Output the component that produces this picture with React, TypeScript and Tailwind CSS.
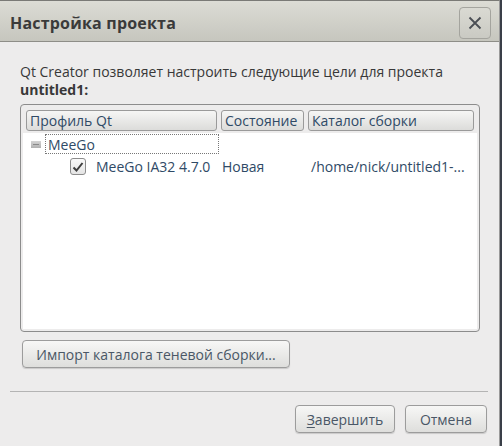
import React from "react";

const font = { fontFamily: '"Open Sans", "DejaVu Sans", sans-serif' };

function HeaderCell({ label, width }: { label: string; width: string }) {
  return (
    <div
      className={`${width} h-[21px] flex items-center px-[3px] rounded-[3px] border border-[#9a9a9a] bg-gradient-to-b from-[#f6f6f5] to-[#dcdcda] text-[14px] text-[#2f4a66] leading-none`}
    >
      {label}
    </div>
  );
}

function Button({ children, className }: { children: React.ReactNode; className: string }) {
  return (
    <div
      className={`${className} h-[28px] flex items-center justify-center rounded-[4px] border border-[#9c9c9c] bg-gradient-to-b from-[#f7f7f6] to-[#dededc] shadow-[0_1px_1px_rgba(0,0,0,0.15)] text-[14px] text-[#4a5766]`}
    >
      {children}
    </div>
  );
}

function App() {
  return (
    <div className="w-[502px] h-[446px] flex bg-[#3a3f48]" style={font}>
      <div className="w-[500px] h-full flex flex-col bg-[#edecec] border-t border-[#7a7a76] border-r border-r-[#9a9a9a]">
        {/* title bar */}
        <div className="h-[41px] flex items-center justify-between pl-[10px] pr-[8px] bg-gradient-to-b from-[#dcdcd5] to-[#c6c6be] border-b border-[#8e8e88]">
          <span className="mt-[4px] text-[16px] font-bold text-[#3a3a3a] tracking-[0.2px]">Настройка проекта</span>
          <div className="w-[32px] h-[32px] mt-[4px] flex items-center justify-center rounded-[4px] border border-[#a4a49e] bg-gradient-to-b from-[#dadad3] to-[#cacac3]">
            <svg width="14" height="14" viewBox="0 0 14 14">
              <path d="M1.5 1.5 L12.5 12.5 M12.5 1.5 L1.5 12.5" stroke="#4a4e54" strokeWidth="1.8" />
            </svg>
          </div>
        </div>

        {/* body */}
        <div className="flex flex-col pl-[20px] pr-[20px] pt-[21px] text-[14px] text-[#383838] leading-[17px]">
          <span>Qt Creator позволяет настроить следующие цели для проекта</span>
          <span className="mt-px font-bold">untitled1:</span>

          {/* target table */}
          <div className="mt-[6px] w-[460px] h-[228px] flex flex-col rounded-[4px] border border-[#8c8c8c] p-[2px] pt-[5px]">
            <div className="flex gap-[4px] pl-[3px] pr-[3px]">
              <HeaderCell label="Профиль Qt" width="w-[191px]" />
              <HeaderCell label="Состояние" width="w-[83px]" />
              <HeaderCell label="Каталог сборки" width="w-[166px]" />
            </div>
            <div className="flex-1 mt-[2px] bg-white flex flex-col text-[#2f4a66]">
              <div className="h-[20px] mt-px flex items-center pl-[8px]">
                <div className="w-[10px] h-[7px] bg-gradient-to-b from-[#d4d4d4] to-[#b0b0b0] flex items-center justify-center">
                  <div className="w-[6px] h-px bg-[#8a8a8a]" />
                </div>
                <div className="ml-[4px] w-[174px] h-[20px] flex items-center pl-[2px] border border-dotted border-[#777]">
                  MeeGo
                </div>
              </div>
              <div className="h-[25px] flex items-center">
                <div className="ml-[47px] w-[16px] h-[17px] rounded-[3px] border border-[#8c8c8c] bg-gradient-to-b from-[#fafafa] to-[#e4e4e4] flex items-center justify-center">
                  <svg width="12" height="12" viewBox="0 0 12 12">
                    <path d="M1.5 6.5 L4.5 9.5 L10.5 2" stroke="#3e3e3e" strokeWidth="2" fill="none" />
                  </svg>
                </div>
                <span className="ml-[10px] w-[126px]">MeeGo IA32 4.7.0</span>
                <span className="w-[89px]">Новая</span>
                <span>/home/nick/untitled1-...</span>
              </div>
            </div>
          </div>

          <Button className="mt-[8px] ml-[2px] w-[268px]">Импорт каталога теневой сборки...</Button>
        </div>

        <div className="mt-[23px] ml-[10px] w-[478px] h-px bg-[#b4b4b4]" />

        <div className="flex justify-end gap-[10px] pr-[12px] mt-[13px]">
          <Button className="w-[100px]">
            <span>
              <span className="underline underline-offset-2">З</span>авершить
            </span>
          </Button>
          <Button className="w-[82px]">Отмена</Button>
        </div>
      </div>
    </div>
  );
}

export default App;
